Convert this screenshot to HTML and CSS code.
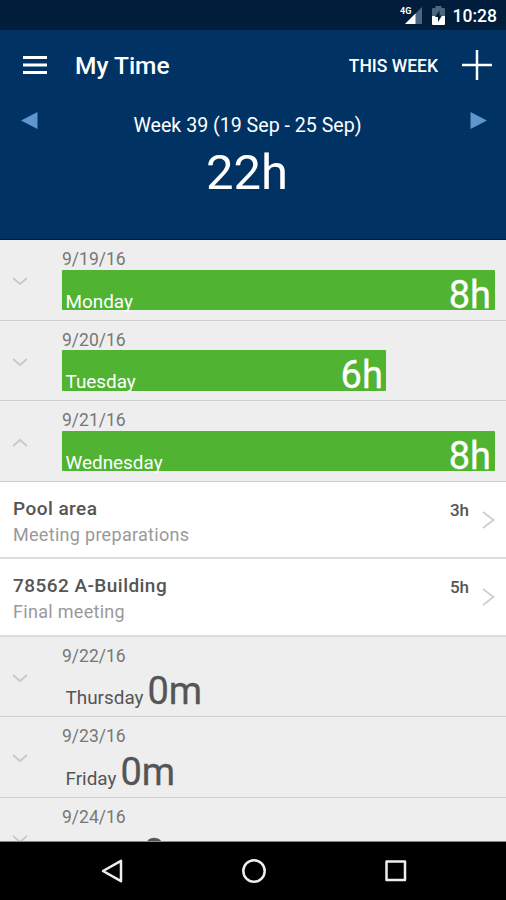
FILE: index.html
```html
<!DOCTYPE html>
<html lang="en">
<head>
    <meta charset="UTF-8">
    <meta name="viewport" content="width=device-width, initial-scale=1.0">
    <title>My Time</title>
    <link rel="stylesheet" href="styles.css">
</head>
<body>
    <div class="status-bar">
        <svg class="signal" width="24" height="20" viewBox="0 0 24 20">
            <path d="M22 1v17H5z" fill="#4d6680"/>
            <path d="M15.500 7.500v10.500H5z" fill="#fff"/>
            <text x="0" y="8" class="signal-label">4G</text>
        </svg>
        <svg class="battery" width="13" height="19" viewBox="0 0 13 19">
            <path d="M3.500 2V0h6v2H12q1 0 1 1v8H0V3q0-1 1-1z" fill="#4d6680"/>
            <path d="M0 10h13v8q0 1-1 1H1q-1 0-1-1z" fill="#fff"/>
            <path d="M7.500 4.500 3 11h3v5l4-6.500H7.500z" fill="#001d3b"/>
        </svg>
        <span class="clock">10:28</span>
    </div>

    <header>
        <div class="toolbar">
            <svg class="menu" width="24" height="19" viewBox="0 0 24 19">
                <path d="M0 1.500h24M0 9h24M0 16.500h24" stroke="#fff" stroke-width="2.800"/>
            </svg>
            <h1>My Time</h1>
            <span class="this-week">THIS WEEK</span>
            <svg class="add" width="30" height="30" viewBox="0 0 30 30">
                <path d="M15 0v30M0 15h30" stroke="#fff" stroke-width="2.500"/>
            </svg>
        </div>
        <div class="week">
            <svg class="arrow" width="17" height="17" viewBox="0 0 17 17"><path d="M0 8.500 16.500 0v17z" fill="#5f96cd"/></svg>
            <span class="week-name">Week 39 (19 Sep - 25 Sep)</span>
            <svg class="arrow" width="17" height="17" viewBox="0 0 17 17"><path d="M17 8.500 .5 0v17z" fill="#5f96cd"/></svg>
        </div>
        <div class="total">22h</div>
    </header>

    <main>
        <section class="day">
            <svg class="chevron" width="16" height="9" viewBox="0 0 16 9"><path d="M1 1l7 6 7-6"/></svg>
            <div class="day-body">
                <div class="date">9/19/16</div>
                <div class="bar" style="width: 100%"><span class="name">Monday</span><span class="hours">8h</span></div>
            </div>
        </section>
        <section class="day">
            <svg class="chevron" width="16" height="9" viewBox="0 0 16 9"><path d="M1 1l7 6 7-6"/></svg>
            <div class="day-body">
                <div class="date">9/20/16</div>
                <div class="bar" style="width: 75%"><span class="name">Tuesday</span><span class="hours">6h</span></div>
            </div>
        </section>
        <section class="day">
            <svg class="chevron" width="16" height="9" viewBox="0 0 16 9"><path d="M1 8l7-6 7 6"/></svg>
            <div class="day-body">
                <div class="date">9/21/16</div>
                <div class="bar" style="width: 100%"><span class="name">Wednesday</span><span class="hours">8h</span></div>
            </div>
        </section>

        <!-- entries for the open day -->
        <div class="entry">
            <div class="entry-text">
                <div class="entry-title">Pool area</div>
                <div class="entry-note">Meeting preparations</div>
            </div>
            <span class="entry-time">3h</span>
            <svg class="next" width="13" height="18" viewBox="0 0 13 18"><path d="M1 1l10.500 8L1 17"/></svg>
        </div>
        <div class="entry">
            <div class="entry-text">
                <div class="entry-title">78562 A-Building</div>
                <div class="entry-note">Final meeting</div>
            </div>
            <span class="entry-time">5h</span>
            <svg class="next" width="13" height="18" viewBox="0 0 13 18"><path d="M1 1l10.500 8L1 17"/></svg>
        </div>

        <section class="day">
            <svg class="chevron" width="16" height="9" viewBox="0 0 16 9"><path d="M1 1l7 6 7-6"/></svg>
            <div class="day-body">
                <div class="date">9/22/16</div>
                <div class="bar empty"><span class="name">Thursday</span><span class="hours">0m</span></div>
            </div>
        </section>
        <section class="day">
            <svg class="chevron" width="16" height="9" viewBox="0 0 16 9"><path d="M1 1l7 6 7-6"/></svg>
            <div class="day-body">
                <div class="date">9/23/16</div>
                <div class="bar empty"><span class="name">Friday</span><span class="hours">0m</span></div>
            </div>
        </section>
        <section class="day">
            <svg class="chevron" width="16" height="9" viewBox="0 0 16 9"><path d="M1 1l7 6 7-6"/></svg>
            <div class="day-body">
                <div class="date">9/24/16</div>
                <div class="bar empty"><span class="name">Saturday</span><span class="hours">0m</span></div>
            </div>
        </section>
    </main>

    <nav>
        <svg width="22" height="24" viewBox="0 0 22 24"><path d="M2 12 20 1.800v20.400z"/></svg>
        <svg width="24" height="24" viewBox="0 0 24 24"><circle cx="12" cy="12" r="10.700"/></svg>
        <svg width="22" height="22" viewBox="0 0 22 22"><path d="M1.500 1.500h18.500v18.500h-18.500z"/></svg>
    </nav>
</body>
</html>
```
FILE: styles.css
```css
* {
    box-sizing: border-box;
}

body {
    display: flex;
    flex-direction: column;
    height: 900px;
    margin: 0;
    overflow: hidden;
    font-family: Roboto, sans-serif;
    background-color: #eee;
}

svg {
    display: block;
    flex: none;
}

.status-bar {
    display: flex;
    justify-content: flex-end;
    height: 30px;
    flex: none;
    padding: 6px 9px 0 0;
    background-color: #001d3b;
    color: #fff;
}

.signal {
    margin-right: 1px;
}

.signal-label {
    font-size: 9px;
    font-weight: bold;
    fill: #fff;
}

.battery {
    margin-left: 7px;
}

.clock {
    margin-left: 8px;
    font-size: 17.500px;
    font-weight: 500;
    line-height: 20px;
}

header {
    height: 210px;
    flex: none;
    background-color: #003264;
    border-bottom: 1px solid #001a58;
    color: #fff;
}

.toolbar {
    display: flex;
    align-items: center;
    height: 70px;
    padding: 0 14px 0 23px;
}

h1 {
    flex: 1;
    margin: 1px 0 0 28px;
    font-size: 24.500px;
    font-weight: 500;
}

.this-week {
    margin: 1px 24px 0 0;
    font-size: 17.500px;
    font-weight: 500;
}

.week {
    display: flex;
    justify-content: space-between;
    height: 50px;
    padding: 12px 19px 0 21px;
}

.week-name {
    margin: 2px 13px 0 0;
    font-size: 19.600px;
    line-height: 24px;
}

.total {
    margin-top: -7px;
    padding-right: 12px;
    font-size: 49px;
    line-height: 59px;
    text-align: center;
}

main {
    flex: 1;
    min-height: 0;
    overflow: hidden;
    border-bottom: 1px solid #888;
}

.day {
    display: flex;
    height: 80.6px;
    padding-right: 11.500px;
    border-bottom: 1px solid #cfcfcf;
    color: #555;
}

.chevron {
    margin: 37px 34px 0 12px;
    fill: none;
    stroke: #c8c8c8;
    stroke-width: 1.800;
}

.day-body {
    flex: 1;
}

.date {
    height: 29.800px;
    padding-top: 9px;
    font-size: 17.500px;
    line-height: 20px;
    color: #777;
}

.bar {
    display: flex;
    align-items: baseline;
    justify-content: space-between;
    height: 40.400px;
    padding: 0 3.500px;
    background-color: #50b432;
    border-radius: 1px;
    color: #fff;
}

.bar.empty {
    justify-content: flex-start;
    gap: 4px;
    background: none;
    color: #555;
}

.name {
    font-size: 18.900px;
}

.hours {
    font-size: 38px;
    line-height: 50px;
    -webkit-text-stroke: 0.3px;
}

.entry {
    display: flex;
    height: 77.400px;
    padding: 0 11px 0 13px;
    background-color: #fff;
    border-bottom: 2px solid #ddd;
    color: #555;
}

.entry-text {
    flex: 1;
    padding-top: 15px;
}

.entry-title {
    font-size: 19px;
    font-weight: 500;
    line-height: 24px;
    letter-spacing: 0.45px;
}

.entry-note {
    margin-top: 2px;
    font-size: 18px;
    line-height: 24px;
    letter-spacing: 0.3px;
    color: #999;
}

.entry-time {
    margin-top: 16px;
    font-size: 17px;
    font-weight: 500;
    line-height: 24px;
}

.next {
    margin: 29px 0 0 13px;
    fill: none;
    stroke: #d0d0d0;
    stroke-width: 2;
}

nav {
    display: flex;
    align-items: center;
    justify-content: space-between;
    height: 58px;
    flex: none;
    padding: 0 99px 0 101px;
    background-color: #000;
}

nav svg {
    fill: none;
    stroke: #eee;
    stroke-width: 2.500;
    stroke-linejoin: round;
}
```
